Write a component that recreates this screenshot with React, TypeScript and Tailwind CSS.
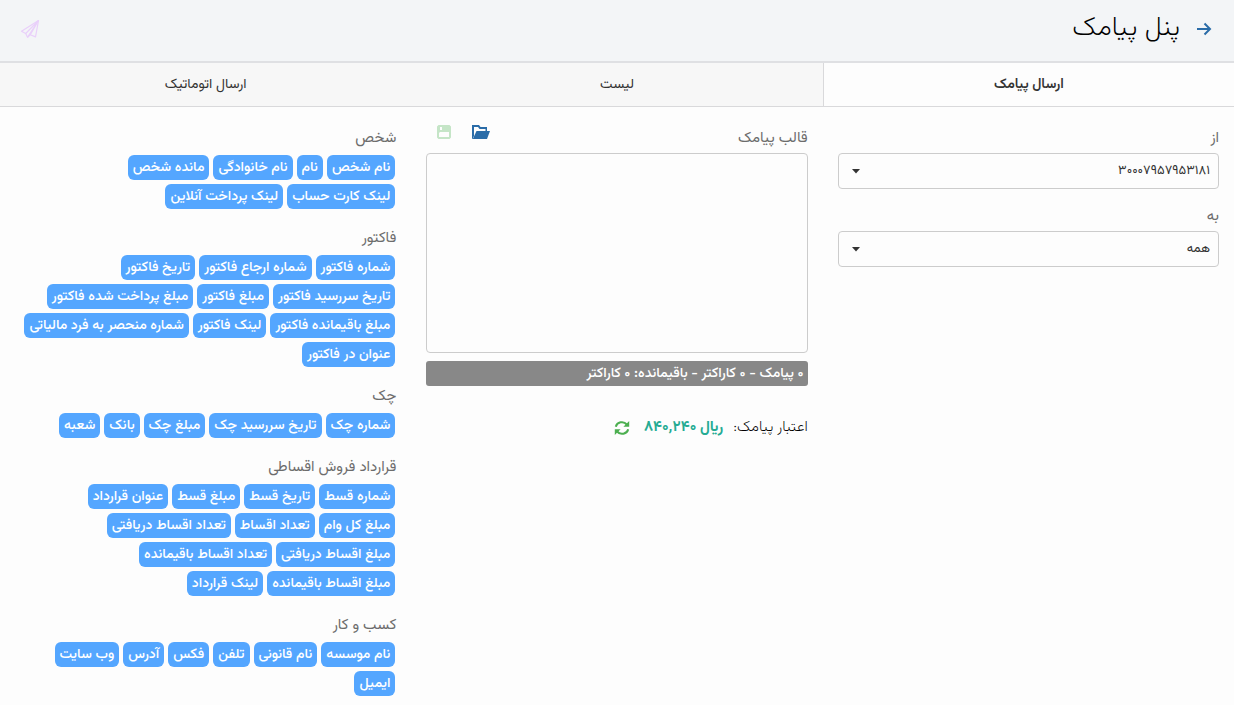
import { useState } from "react";
import clsx from "clsx";

const tabs = ["ارسال پیامک", "لیست", "ارسال اتوماتیک"];

const tagGroups = [
  {
    title: "شخص",
    tags: ["نام شخص", "نام", "نام خانوادگی", "مانده شخص", "لینک کارت حساب", "لینک پرداخت آنلاین"],
  },
  {
    title: "فاکتور",
    tags: [
      "شماره فاکتور",
      "شماره ارجاع فاکتور",
      "تاریخ فاکتور",
      "تاریخ سررسید فاکتور",
      "مبلغ فاکتور",
      "مبلغ پرداخت شده فاکتور",
      "مبلغ باقیمانده فاکتور",
      "لینک فاکتور",
      "شماره منحصر به فرد مالیاتی",
      "عنوان در فاکتور",
    ],
  },
  {
    title: "چک",
    tags: ["شماره چک", "تاریخ سررسید چک", "مبلغ چک", "بانک", "شعبه"],
  },
  {
    title: "قرارداد فروش اقساطی",
    tags: [
      "شماره قسط",
      "تاریخ قسط",
      "مبلغ قسط",
      "عنوان قرارداد",
      "مبلغ کل وام",
      "تعداد اقساط",
      "تعداد اقساط دریافتی",
      "مبلغ اقساط دریافتی",
      "تعداد اقساط باقیمانده",
      "مبلغ اقساط باقیمانده",
      "لینک قرارداد",
    ],
  },
  {
    title: "کسب و کار",
    tags: ["نام موسسه", "نام قانونی", "تلفن", "فکس", "آدرس", "وب سایت", "ایمیل"],
  },
];

const ArrowIcon = () => (
  <svg width="20" height="20" viewBox="0 0 20 20" fill="none" stroke="currentColor" strokeWidth="2">
    <path d="M3 10h13M10.500 4.500 16 10l-5.500 5.500" />
  </svg>
);

const SendIcon = () => (
  <svg width="20" height="20" viewBox="0 0 20 20" fill="none" stroke="currentColor" strokeWidth="1.2" strokeLinejoin="round">
    <path d="M18.5 1.5 1.5 12.2l4.2 2.3 1.8 3.8 2.8-2.6 5.2 2.2z" />
    <path d="M18.5 1.5 5.7 14.5M18.5 1.5 7.5 18.3M18.5 1.5l-8.2 14.2" />
  </svg>
);

const SaveIcon = () => (
  <svg width="16" height="16" viewBox="0 0 16 16" fill="currentColor">
    <path
      fillRule="evenodd"
      d="M2.500 1h11L15 2.500v11L13.500 15h-11L1 13.500v-11zM4 3v3h2V3zM3 9v4h10V8H4z"
    />
  </svg>
);

const FolderIcon = () => (
  <svg width="18" height="16" viewBox="0 0 18 16" fill="currentColor">
    <path d="M0 1h7l1.500 2H15v4h-1.500V5H7.500L6 3H2v9L.500 15H0z" />
    <path d="M4.500 7H18l-3 8H.8z" />
  </svg>
);

const RefreshIcon = () => (
  <svg width="16" height="16" viewBox="0 0 16 16" fill="none" stroke="currentColor" strokeWidth="2">
    <path d="M1.800 6.800a6.200 5.800 0 0 1 11-2.300M14.200 9.200a6.200 5.800 0 0 1-11 2.300" />
    <path d="M15.200 1v5.800H9.400zM.8 15V9.200h5.800z" fill="currentColor" stroke="none" />
  </svg>
);

interface SelectFieldProps {
  id: string;
  label: string;
  options: string[];
}

const SelectField: React.FC<SelectFieldProps> = ({ id, label, options }) => (
  <div className="mb-4">
    <label htmlFor={id} className="mb-0.5 block text-[15px] leading-6 text-[#6c6c6c]">
      {label}
    </label>
    <div className="relative">
      <select
        id={id}
        className="h-9 w-full appearance-none rounded border border-[#ccc] bg-transparent pr-2 pl-8 text-[13px] text-[#333] focus:outline-none"
      >
        {options.map((option) => (
          <option key={option}>{option}</option>
        ))}
      </select>
      <svg className="pointer-events-none absolute top-4 left-3.5" width="8" height="5" viewBox="0 0 8 5">
        <path d="M0 0h8L4 4.500z" fill="#333" />
      </svg>
    </div>
  </div>
);

export default function App() {
  const [activeTab, setActiveTab] = useState(0);
  const [message, setMessage] = useState("");

  const addTag = (tag: string) => setMessage((m) => `${m}[${tag}]`);

  return (
    <div
      dir="rtl"
      className="min-h-screen bg-[#fdfdfd] font-[Vazirmatn,'Noto_Sans_Arabic','DejaVu_Sans',sans-serif] text-sm text-[#333]"
    >
      <header className="flex h-[63px] items-center justify-between border-b-2 border-[#dfe0e3] bg-[#f3f5f7] px-5 pb-1">
        <div className="flex items-center gap-3.5">
          <a href="#back" aria-label="بازگشت" className="text-[#2a6ca8]">
            <ArrowIcon />
          </a>
          <h1 className="text-[27px] leading-10 font-extralight text-black">پنل پیامک</h1>
        </div>
        <button type="button" aria-label="ارسال" className="text-[#e9d0fa]">
          <SendIcon />
        </button>
      </header>

      <nav className="grid grid-cols-3">
        {tabs.map((tab, i) => (
          <button
            key={tab}
            type="button"
            onClick={() => setActiveTab(i)}
            className={clsx(
              "h-11 border-b border-[#d9d9db]",
              i === activeTab ? "border-l bg-[#fdfdfd] font-semibold" : "bg-[#f7f7f7]"
            )}
          >
            {tab}
          </button>
        ))}
      </nav>

      <main className="grid grid-cols-3 pt-5">
        <section className="px-[15px]">
          <SelectField id="from" label="از" options={["۳۰۰۰۷۹۵۷۹۵۳۱۸۱"]} />
          <SelectField id="to" label="به" options={["همه"]} />
        </section>

        <section className="px-[15px]">
          <div className="mb-0.5 flex h-6 items-start justify-between">
            <label htmlFor="template" className="text-[15px] leading-6 text-[#6c6c6c]">
              قالب پیامک
            </label>
            <div className="-mt-[3px] flex items-center gap-5 px-2.5">
              <button type="button" aria-label="باز کردن قالب" className="text-[#2a6ca8]">
                <FolderIcon />
              </button>
              <button type="button" aria-label="ذخیره قالب" className="text-[#c5e5c7]">
                <SaveIcon />
              </button>
            </div>
          </div>
          <textarea
            id="template"
            value={message}
            onChange={(e) => setMessage(e.target.value)}
            className="block h-[200px] w-full resize-none rounded border border-[#ccc] bg-transparent p-2 focus:outline-none"
          />
          <div className="mt-2 rounded-[3px] bg-[#888] px-1 pt-0.5 leading-[23px] font-medium text-white">
            ۰ پیامک - ۰ کاراکتر - باقیمانده: ۰ کاراکتر
          </div>
          <div className="mt-[30px] flex items-center text-[15px] leading-6">
            <span className="font-extralight text-black">اعتبار پیامک:</span>
            <span className="mr-2.5 font-bold text-[#25ab93]">﷼ ۸۴۰٬۲۴۰</span>
            <button type="button" aria-label="به‌روزرسانی اعتبار" className="mr-3.5 text-[#4caf50]">
              <RefreshIcon />
            </button>
          </div>
        </section>

        <section className="flex flex-col gap-[18px] px-[15px] pb-2">
          {tagGroups.map((group) => (
            <div key={group.title}>
              <h2 className="mb-1 text-[15px] leading-6 text-[#6c6c6c]">{group.title}</h2>
              <div className="flex flex-wrap gap-1 pr-px pl-0.5">
                {group.tags.map((tag) => (
                  <button
                    key={tag}
                    type="button"
                    onClick={() => addTag(tag)}
                    className="rounded-md bg-[#54a6ff] px-[5px] pt-0.5 leading-[23px] font-medium text-white"
                  >
                    {tag}
                  </button>
                ))}
              </div>
            </div>
          ))}
        </section>
      </main>
    </div>
  );
}
